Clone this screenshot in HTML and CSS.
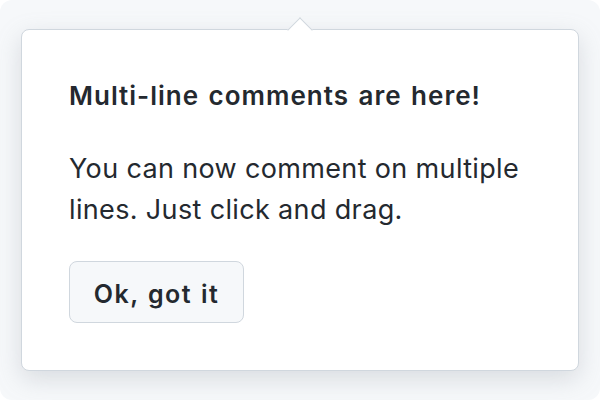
FILE: index.html
```html
<!DOCTYPE html>
<html lang="en">
<head>
<meta charset="utf-8">
<title>Popover</title>
<link rel="stylesheet" href="styles.css">
</head>
<body>
<div class="stage">
  <div class="popover">
    <h4 class="popover-title">Multi-line comments are here!</h4>
    <p class="popover-text">You can now comment on multiple lines. Just click and drag.</p>
    <button class="btn" type="button">Ok, got it</button>
  </div>
</div>
</body>
</html>
```

FILE: styles.css
```css
html, body {
  margin: 0;
  padding: 0;
  background: #ffffff;
}
body {
  width: 600px;
  height: 400px;
  font-family: Inter, "Noto Sans", "Liberation Sans", sans-serif;
  color: #24292f;
}
.stage {
  box-sizing: border-box;
  width: 600px;
  height: 400px;
  background: #f6f8fa;
  border-radius: 12px;
  padding: 29px 21px 29px;
  display: flex;
  flex-direction: column;
}
.popover {
  position: relative;
  box-sizing: border-box;
  flex: 1;
  background: #ffffff;
  border: 1px solid #d0d7de;
  border-radius: 8px;
  box-shadow: 0 8px 24px rgba(140, 149, 159, 0.28);
  padding: 50px 47px 0;
  display: flex;
  flex-direction: column;
  align-items: flex-start;
}
.popover::before {
  content: "";
  position: absolute;
  top: -9px;
  left: 269px;
  width: 17px;
  height: 17px;
  background: #ffffff;
  border-top: 1px solid #d0d7de;
  border-left: 1px solid #d0d7de;
  transform: rotate(45deg);
}
.popover-title {
  margin: 0;
  font-size: 26px;
  font-weight: 600;
  line-height: 32px;
  letter-spacing: 1px;
  word-spacing: 2px;
}
.popover-text {
  margin: 36px 0 0;
  font-size: 27px;
  font-weight: 400;
  line-height: 41px;
  letter-spacing: 0.35px;
}
.btn {
  margin-top: 31px;
  box-sizing: border-box;
  width: 175px;
  height: 62px;
  font-family: inherit;
  font-size: 25px;
  font-weight: 600;
  letter-spacing: 1.5px;
  word-spacing: 1px;
  color: #24292f;
  background: #f6f8fa;
  border: 1px solid #d0d7de;
  border-radius: 8px;
  padding: 4px 0 0;
}
```
